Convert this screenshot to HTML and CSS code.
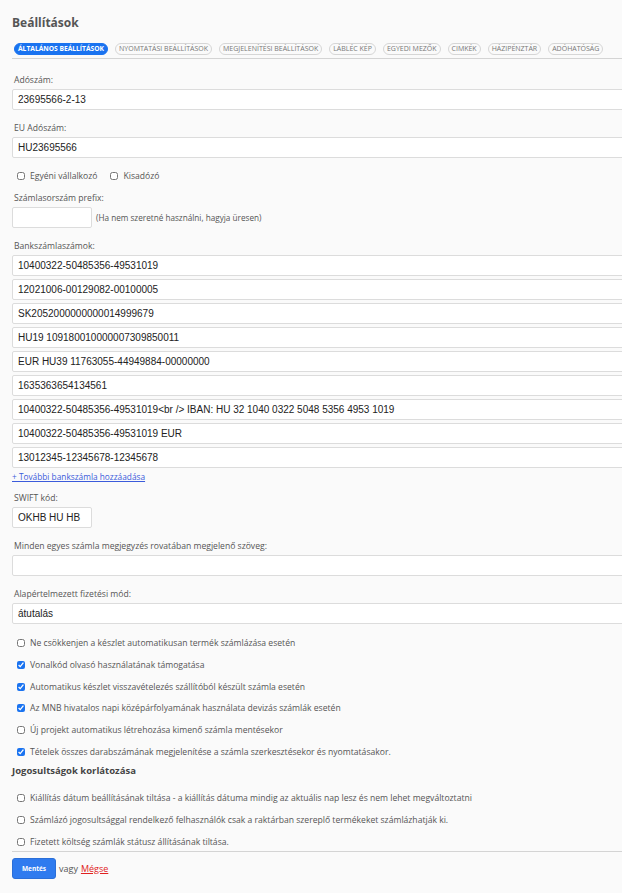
FILE: index.html
```html
<!DOCTYPE html>
<html lang="hu">
<head>
    <meta charset="UTF-8">
    <meta name="viewport" content="width=device-width, initial-scale=1.0">
    <title>Beállítások</title>
    <link rel="stylesheet" href="styles.css">
</head>
<body>
    <div class="page">
        <h1 class="page-title">Beállítások</h1>

        <!-- Tabs -->
        <ul class="tabs">
            <li class="tab active">Általános beállítások</li>
            <li class="tab">Nyomtatási beállítások</li>
            <li class="tab">Megjelenítési beállítások</li>
            <li class="tab">Lábléc kép</li>
            <li class="tab">Egyedi mezők</li>
            <li class="tab">Cimkék</li>
            <li class="tab">Házipénztár</li>
            <li class="tab">Adóhatóság</li>
        </ul>

        <form class="settings-form">
            <div class="field first">
                <label class="field-label">Adószám:</label>
                <input class="text-input" type="text" value="23695566-2-13">
            </div>

            <div class="field">
                <label class="field-label">EU Adószám:</label>
                <input class="text-input" type="text" value="HU23695566">
            </div>

            <div class="inline-checks">
                <label class="check"><input type="checkbox"> Egyéni vállalkozó</label>
                <label class="check"><input type="checkbox"> Kisadózó</label>
            </div>

            <div class="field prefix-field">
                <label class="field-label">Számlasorszám prefix:</label>
                <div class="prefix-row">
                    <input class="text-input short" type="text" value="">
                    <span class="hint">(Ha nem szeretné használni, hagyja üresen)</span>
                </div>
            </div>

            <!-- Bank accounts -->
            <div class="field">
                <label class="field-label">Bankszámlaszámok:</label>
                <div class="bank-list">
                    <input class="text-input" type="text" value="10400322-50485356-49531019">
                    <input class="text-input" type="text" value="12021006-00129082-00100005">
                    <input class="text-input" type="text" value="SK2052000000000014999679">
                    <input class="text-input" type="text" value="HU19 109180010000007309850011">
                    <input class="text-input" type="text" value="EUR HU39 11763055-44949884-00000000">
                    <input class="text-input" type="text" value="1635363654134561">
                    <input class="text-input" type="text" value="10400322-50485356-49531019<br /> IBAN: HU 32 1040 0322 5048 5356 4953 1019">
                    <input class="text-input" type="text" value="10400322-50485356-49531019 EUR">
                    <input class="text-input" type="text" value="13012345-12345678-12345678">
                </div>
                <a class="add-link" href="#">+ További bankszámla hozzáadása</a>
            </div>

            <div class="field swift-field">
                <label class="field-label">SWIFT kód:</label>
                <input class="text-input short" type="text" value="OKHB HU HB">
            </div>

            <div class="field">
                <label class="field-label">Minden egyes számla megjegyzés rovatában megjelenő szöveg:</label>
                <input class="text-input" type="text" value="">
            </div>

            <div class="field">
                <label class="field-label">Alapértelmezett fizetési mód:</label>
                <div class="text-input select-box">átutalás</div>
            </div>

            <div class="check-list">
                <label class="check"><input type="checkbox"> Ne csökkenjen a készlet automatikusan termék számlázása esetén</label>
                <label class="check"><input type="checkbox" checked> Vonalkód olvasó használatának támogatása</label>
                <label class="check"><input type="checkbox" checked> Automatikus készlet visszavételezés szállítóból készült számla esetén</label>
                <label class="check"><input type="checkbox" checked> Az MNB hivatalos napi középárfolyamának használata devizás számlák esetén</label>
                <label class="check"><input type="checkbox"> Új projekt automatikus létrehozása kimenő számla mentésekor</label>
                <label class="check"><input type="checkbox" checked> Tételek összes darabszámának megjelenítése a számla szerkesztésekor és nyomtatásakor.</label>
            </div>

            <h2 class="section-title">Jogosultságok korlátozása</h2>

            <div class="check-list rights">
                <label class="check"><input type="checkbox"> Kiállítás dátum beállításának tiltása - a kiállítás dátuma mindig az aktuális nap lesz és nem lehet megváltoztatni</label>
                <label class="check"><input type="checkbox"> Számlázó jogosultsággal rendelkező felhasználók csak a raktárban szereplő termékeket számlázhatják ki.</label>
                <label class="check"><input type="checkbox"> Fizetett költség számlák státusz állításának tiltása.</label>
            </div>

            <div class="form-actions">
                <button class="save-btn" type="button">Mentés</button>
                <span class="or">vagy</span>
                <a class="cancel-link" href="#">Mégse</a>
            </div>
        </form>
    </div>
</body>
</html>
```

FILE: styles.css
```css
/* Reset */
* {
    margin: 0;
    padding: 0;
    box-sizing: border-box;
}

:root {
    --bg: #fafafa;
    --text: #555;
    --input-text: #222;
    --border: #dcdcdc;
    --blue: #1a73f0;
}

html, body {
    background-color: var(--bg);
    color: var(--text);
    font-family: 'Open Sans', sans-serif;
    overflow: hidden;
}

.page {
    width: 660px;
    padding: 14px 0 0 12px;
}

.page-title {
    font-size: 12px;
    font-weight: 700;
    line-height: 18px;
    color: #555;
}

/* Tabs */
.tabs {
    list-style: none;
    display: flex;
    gap: 7px;
    margin-top: 11px;
    padding: 0 0 3px 2px;
    border-bottom: 1px solid #d4d4d4;
}

.tab {
    font-size: 7px;
    text-transform: uppercase;
    line-height: 10px;
    padding: 0 3px;
    border: 1px solid #d6d6d6;
    border-radius: 7px;
    color: #777;
    white-space: nowrap;
}

.tab.active {
    font-size: 6.7px;
    background-color: var(--blue);
    border-color: var(--blue);
    color: #fff;
    font-weight: 700;
}

/* Fields */
.field {
    margin-top: 11px;
}

.field.first {
    margin-top: 14px;
}

.field-label {
    display: block;
    padding-left: 2px;
    font-size: 8.6px;
    line-height: 14px;
    margin-bottom: 2px;
    color: #555;
}

.text-input {
    display: block;
    width: 100%;
    height: 21px;
    padding: 0 5px;
    font-family: 'Liberation Sans', Arial, sans-serif;
    font-size: 10px;
    color: var(--input-text);
    background-color: #fff;
    border: 1px solid var(--border);
    border-radius: 2px;
    outline: none;
}

.text-input.short {
    width: 80px;
}

.select-box {
    line-height: 19px;
}

.prefix-row {
    display: flex;
    align-items: center;
    gap: 4px;
}

.hint {
    font-size: 8.2px;
    color: #555;
}

/* Checkboxes */
.check {
    display: flex;
    align-items: center;
    gap: 5px;
    font-size: 8.6px;
    line-height: 14px;
    color: #555;
    white-space: nowrap;
}

.check input {
    width: 8px;
    height: 8px;
    margin: 0 0 0 5px;
    accent-color: #1a73f0;
}

.inline-checks {
    display: flex;
    gap: 8px;
    margin-top: 11px;
}

.prefix-field {
    margin-top: 8px;
}

.bank-list {
    display: flex;
    flex-direction: column;
    gap: 3px;
}

.add-link {
    display: block;
    margin-top: 2px;
    font-size: 8.3px;
    line-height: 14px;
    color: #3b5bdb;
}

.swift-field {
    margin-top: 7px;
}

.check-list {
    display: flex;
    flex-direction: column;
    gap: 7.8px;
    margin-top: 12px;
}

.section-title {
    font-size: 9.5px;
    font-weight: 700;
    line-height: 14px;
    margin-top: 5px;
    color: #444;
}

.check-list.rights {
    margin-top: 13px;
    padding-bottom: 2px;
    border-bottom: 1px solid #d4d4d4;
}

/* Actions */
.form-actions {
    display: flex;
    align-items: center;
    gap: 3px;
    margin-top: 6px;
    font-size: 9px;
}

.save-btn {
    width: 44px;
    height: 21px;
    background-color: #2f7bef;
    border: 1px solid #2b6fd8;
    border-radius: 3px;
    color: #fff;
    font-family: 'Open Sans', sans-serif;
    font-size: 6.5px;
    font-weight: 700;
}

.or {
    color: #555;
}

.cancel-link {
    color: #e02020;
}
```
